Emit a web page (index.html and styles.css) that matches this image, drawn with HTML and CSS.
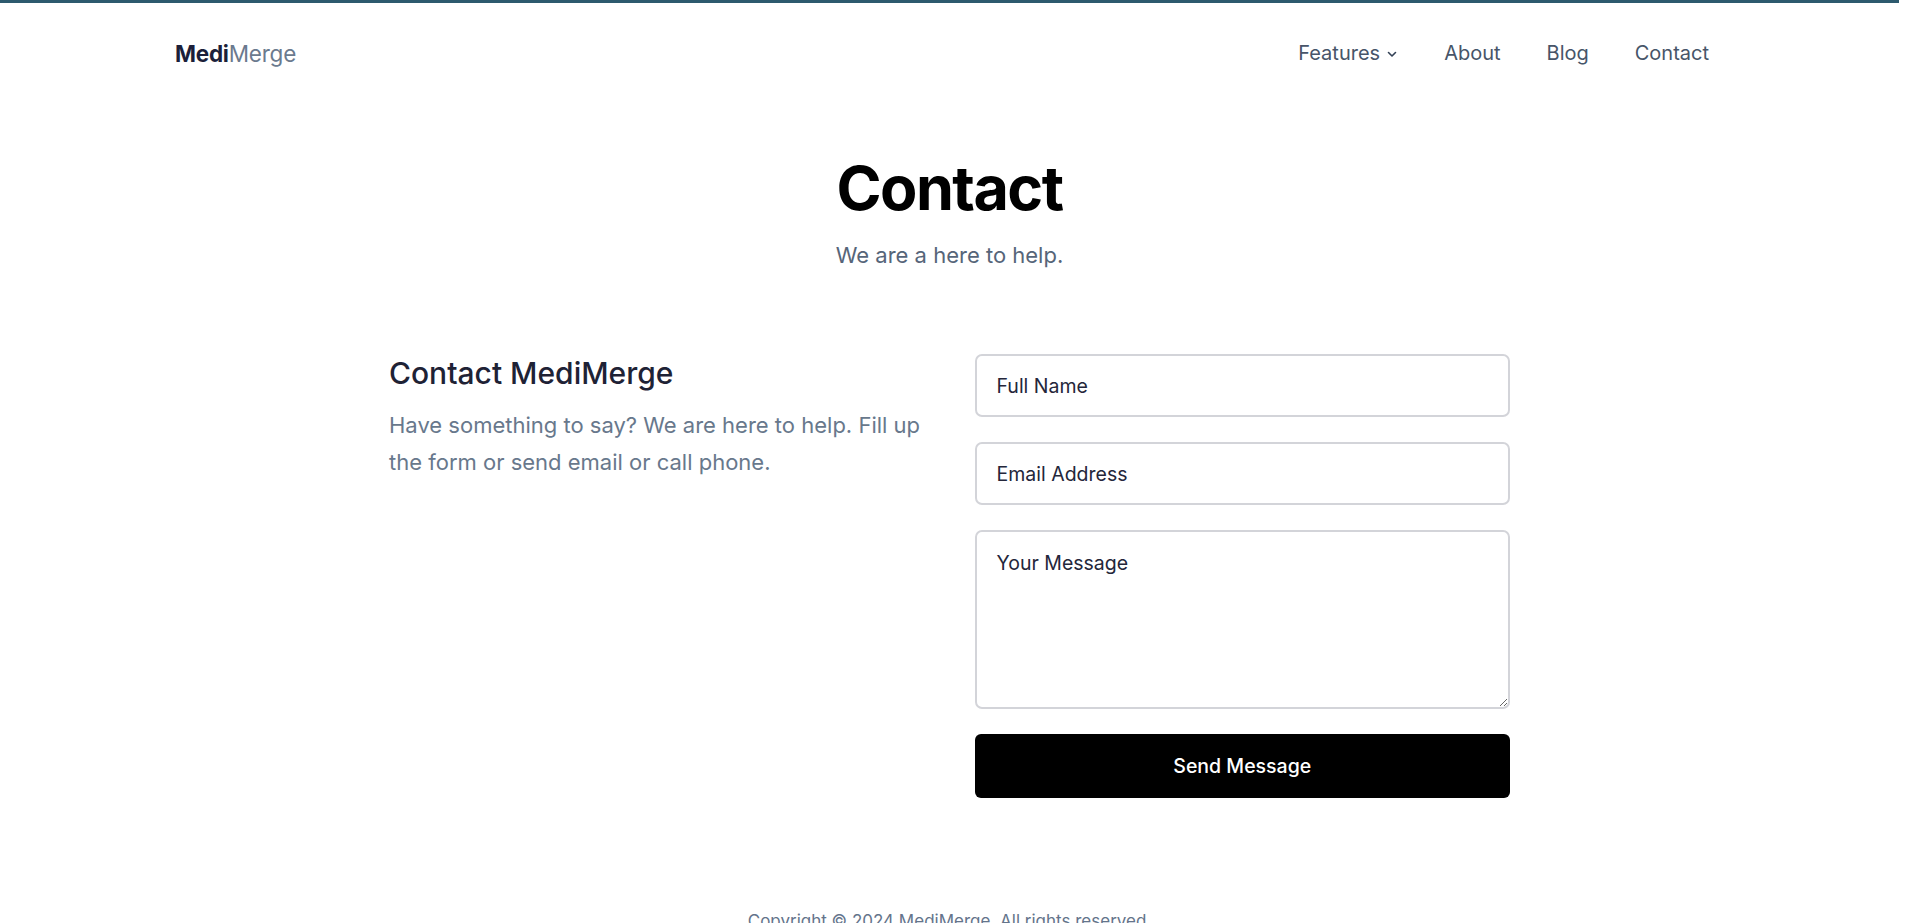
FILE: index.html
```html
<!DOCTYPE html>
<html lang="en">
<head>
<meta charset="utf-8">
<title>Contact | MediMerge</title>
<link rel="stylesheet" href="styles.css">
</head>
<body>
<div class="topbar"></div>
<header class="site-header">
  <div class="header-inner">
    <a class="logo" href="#"><span class="logo-bold">Medi</span><span class="logo-light">Merge</span></a>
    <nav class="nav">
      <a class="nav-link" href="#">Features
        <svg class="chevron" viewBox="0 0 12 12" width="12" height="12" aria-hidden="true"><path d="M2.5 4.5 6 8l3.5-3.5" fill="none" stroke="currentColor" stroke-width="1.6" stroke-linecap="round" stroke-linejoin="round"/></svg>
      </a>
      <a class="nav-link" href="#">About</a>
      <a class="nav-link" href="#">Blog</a>
      <a class="nav-link" href="#">Contact</a>
    </nav>
  </div>
</header>
<main class="page">
  <section class="intro">
    <h1 class="title">Contact</h1>
    <p class="subtitle">We are a here to help.</p>
  </section>
  <section class="contact-grid">
    <div class="contact-info">
      <h2 class="info-title">Contact MediMerge</h2>
      <p class="info-text">Have something to say? We are here to help. Fill up the form or send email or call phone.</p>
    </div>
    <form class="contact-form">
      <input class="field" type="text" placeholder="Full Name">
      <input class="field" type="email" placeholder="Email Address">
      <textarea class="field field-area" placeholder="Your Message"></textarea>
      <button class="send-btn" type="button">Send Message</button>
    </form>
  </section>
</main>
<footer class="site-footer">
  <p class="copyright">Copyright © 2024 MediMerge. All rights reserved.</p>
</footer>
</body>
</html>
```
FILE: styles.css
```css
* { box-sizing: border-box; }

html, body {
  margin: 0;
  padding: 0;
  background: #ffffff;
}

body {
  /* reserve the 21px scrollbar gutter the reference browser shows */
  padding-right: 21px;
  font-family: Inter, "Noto Sans", "Liberation Sans", sans-serif;
  color: #1e2235;
}

.topbar {
  height: 3px;
  background: #2d5a6e;
}

.site-header {
  height: 100px;
}

.header-inner {
  max-width: 1549px;
  height: 100%;
  margin: 0 auto;
  padding-right: 15px;
  display: flex;
  align-items: center;
  justify-content: space-between;
}

.logo {
  font-size: 22.5px;
  text-decoration: none;
  letter-spacing: -0.01em;
}

.logo-bold {
  font-weight: 700;
  color: #1c1f3a;
}

.logo-light {
  font-weight: 400;
  color: #6b7a8e;
}

.nav {
  display: flex;
  align-items: center;
  gap: 46px;
}

.nav-link {
  font-size: 20px;
  color: #475569;
  text-decoration: none;
  display: flex;
  align-items: center;
  gap: 6px;
}

.chevron {
  color: #334155;
  margin-top: 2px;
}

.page {
  max-width: 1121px;
  margin: 0 auto;
}

.intro {
  padding-top: 52px;
  text-align: center;
}

.title {
  margin: 0;
  font-size: 61px;
  line-height: 67px;
  font-weight: 700;
  letter-spacing: -0.025em;
  color: #000000;
}

.subtitle {
  margin: 17px 0 0;
  font-size: 22px;
  line-height: 32px;
  color: #566579;
}

.contact-grid {
  margin-top: 83px;
  display: grid;
  grid-template-columns: 1fr 1fr;
  column-gap: 50px;
}

.info-title {
  margin: 0;
  font-size: 30px;
  line-height: 38px;
  font-weight: 500;
  color: #1e2235;
}

.info-text {
  margin: 15px 0 0;
  font-size: 22px;
  line-height: 36.75px;
  color: #68788c;
}

.contact-form {
  display: flex;
  flex-direction: column;
  gap: 25px;
}

.field {
  display: block;
  width: 100%;
  height: 63px;
  padding: 0 20px;
  border: 2px solid #d3d4d9;
  border-radius: 7px;
  background: #ffffff;
  font-family: Inter, "Noto Sans", "Liberation Sans", sans-serif;
  font-size: 19.5px;
  color: #1e2235;
  outline: none;
}

.field::placeholder {
  color: #24263a;
  opacity: 1;
}

.field-area {
  height: 179px;
  padding: 16px 20px;
  line-height: 30px;
  resize: vertical;
}

.send-btn {
  height: 64px;
  border: none;
  border-radius: 6px;
  background: #000000;
  color: #ffffff;
  font-family: Inter, "Noto Sans", "Liberation Sans", sans-serif;
  font-size: 19.5px;
  font-weight: 500;
  cursor: pointer;
}

.site-footer {
  margin-top: 109px;
  padding-bottom: 125px;
  text-align: center;
}

.copyright {
  margin: 0;
  font-size: 17px;
  line-height: 28px;
  color: #64748b;
}
```
